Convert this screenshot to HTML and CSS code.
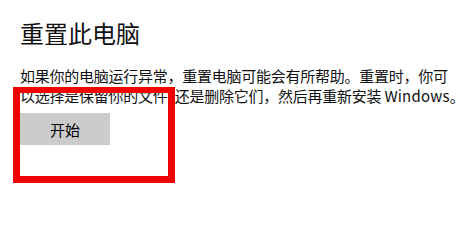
FILE: index.html
```html
<!DOCTYPE html>
<html lang="zh-CN">
<head>
<meta charset="utf-8">
<title>重置此电脑</title>
<link rel="stylesheet" href="styles.css">
</head>
<body>
<main class="page">
  <h1 class="title">重置此电脑</h1>
  <p class="desc">
    <span class="line">如果你的电脑运行异常，重置电脑可能会有所帮助。重置时，你可</span>
    <span class="line">以选择是保留你的文件<span class="half">，</span>还是删除它们，然后再重新安装 <span class="latin">Windows</span>。</span>
  </p>
  <button class="btn" type="button">开始</button>
  <div class="highlight"></div>
</main>
</body>
</html>
```

FILE: styles.css
```css
html, body {
  margin: 0;
  padding: 0;
  background: #ffffff;
}
body {
  width: 473px;
  height: 213px;
  overflow: hidden;
  font-family: "Noto Sans CJK SC", "Noto Sans", sans-serif;
  color: #000;
}
.page {
  position: relative;
  display: flex;
  flex-direction: column;
  align-items: flex-start;
  padding: 17px 0 0 20px;
}
.title {
  margin: 0;
  font-size: 24px;
  font-weight: 400;
  line-height: 32px;
  color: #111;
}
.desc {
  margin: 17px 0 0 0;
  font-size: 15px;
  line-height: 20px;
  letter-spacing: -0.25px;
  color: #111;
}
.line {
  display: block;
  white-space: nowrap;
}
.half {
  font-feature-settings: "halt";
}
.latin {
  letter-spacing: 0.2px;
}
.btn {
  margin-top: 7px;
  width: 90px;
  height: 32px;
  border: none;
  background: #cccccc;
  font-family: inherit;
  font-size: 15px;
  color: #000;
  padding: 0;
}
.highlight {
  position: absolute;
  left: 13px;
  top: 87px;
  width: 148px;
  height: 83px;
  border: 7px solid #f00000;
  border-top-width: 6px;
}
```
